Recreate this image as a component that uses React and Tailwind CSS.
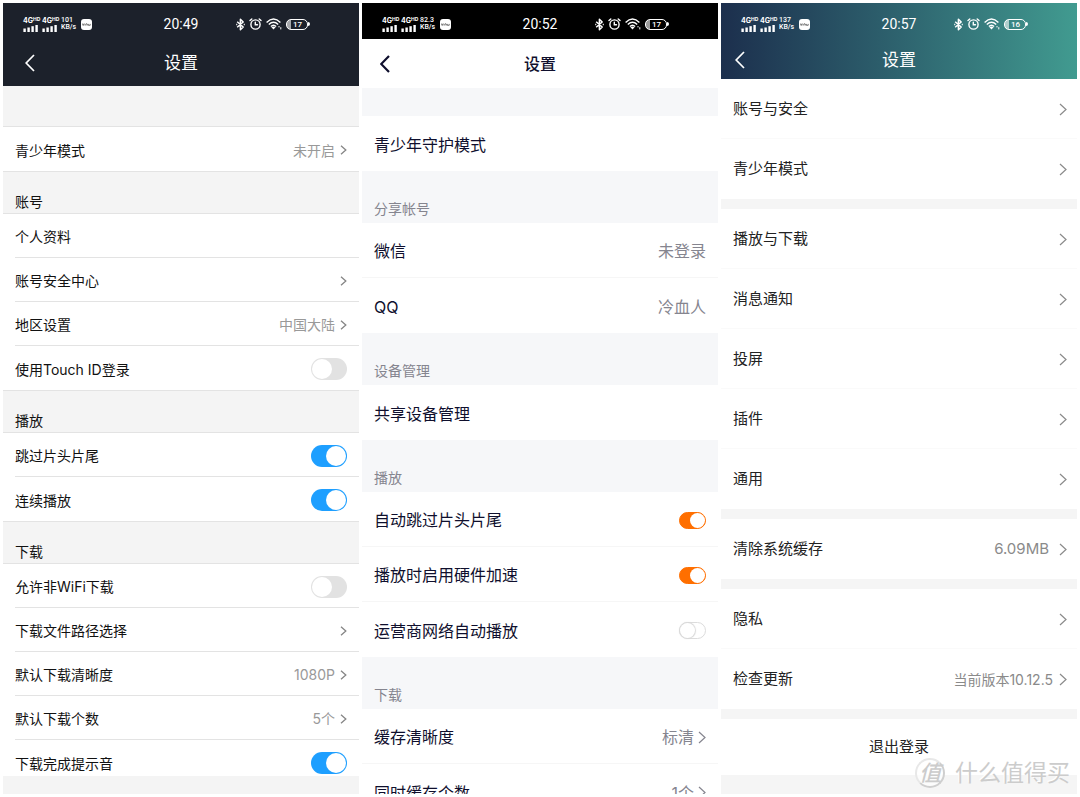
import React from "react";

function Signal() {
  return (
    <span className="flex w-4 flex-col items-start gap-px">
      <span className="flex items-start text-[7px] leading-[7px] font-bold">
        4G<sup className="top-0 text-[5px] leading-[5px] font-bold">HD</sup>
      </span>
      <svg width="15" height="7" viewBox="0 0 15 7" fill="currentColor" aria-hidden="true">
        <rect x="0.4" y="3.5" width="2.4" height="3.5" />
        <rect x="4.4" y="2.5" width="2.4" height="4.5" />
        <rect x="8.4" y="1.2" width="2.4" height="5.8" />
        <rect x="12.4" y="0" width="2.4" height="7" />
      </svg>
    </span>
  );
}

function StatusBar({ speed, time, battery, className = "" }) {
  return (
    <div className={`grid h-9 grid-cols-[1fr_auto_1fr] items-center pt-1.5 text-white ${className}`}>
      <div className="flex items-center gap-[3px] pl-5">
        <Signal />
        <Signal />
        <span className="w-4 font-['Roboto'] text-[7px] leading-[7px] font-medium">
          {speed}
          <br />
          KB/s
        </span>
        <span className="ml-px flex h-[11px] w-[11px] items-center justify-center rounded-[3px] bg-white">
          <svg width="9" height="3" viewBox="0 0 9 3" fill="none" stroke="#555" strokeWidth="0.8" aria-hidden="true">
            <path d="M0.3 0.5 1.2 2.5 2.1 0.5M3 0.8V2.5M4 2.4V1.2Q5 0 5.4 1.2V2.4M6.3 0.9V2.3H8.2V0.9" />
          </svg>
        </span>
      </div>
      <time className="font-['Roboto'] text-[14px] leading-5">{time}</time>
      <div className="flex items-center gap-1 pl-[38px]">
        <svg width="9" height="13" viewBox="0 0 9 13" fill="none" stroke="currentColor" strokeWidth="1.5" strokeLinejoin="round" aria-hidden="true">
          <path d="M1.2 3.8 7.2 9 4.4 11.8V1.2L7.2 4 1.2 9.2" />
          <path d="M0.2 6.5h1.1M7.7 6.5h1.1" />
        </svg>
        <svg width="13" height="12" viewBox="0 0 13 12" fill="none" stroke="currentColor" strokeWidth="1.4" strokeLinecap="round" aria-hidden="true">
          <circle cx="6.5" cy="6.5" r="4.6" />
          <path d="M6.3 4.2v2.6h2.2M1 2.6 2.8 0.9M12 2.6 10.2 0.9" />
        </svg>
        <svg width="16" height="12" viewBox="0 0 16 12" fill="none" stroke="currentColor" strokeWidth="1.4" aria-hidden="true">
          <path d="M0.6 4.4Q7.5-2.4 14.4 4.4M2.8 6.5Q7.5 2 12.2 6.5M4.9 8.6Q7.5 6 10.1 8.6" />
          <path d="M7.5 11.6 5.4 9.3Q7.5 7.8 9.6 9.3Z" fill="currentColor" stroke="none" />
          <path d="M13 8v1.4M14.8 9.2v2.2" strokeWidth="1" />
        </svg>
        <span className="flex items-center">
          <span className="flex h-[11px] w-[22px] items-center justify-center rounded-[5px] border border-current bg-linear-to-r from-white/60 from-[18%] to-transparent to-[18%] font-['Roboto'] text-[8px] leading-[9px] font-medium">
            {battery}
          </span>
          <span className="h-1 w-[2px] rounded-r-sm bg-current" />
        </span>
      </div>
    </div>
  );
}

function BackButton({ className = "", width = 1.7 }) {
  return (
    <button type="button" aria-label="返回" className={`flex h-6 items-center justify-start ${className}`}>
      <svg width="10" height="18" viewBox="0 0 10 18" fill="none" stroke="currentColor" strokeWidth={width} aria-hidden="true">
        <path d="M9 1 1.2 9 9 17" />
      </svg>
    </button>
  );
}

function TitleBar({ className, titleClass, backClass, stroke }) {
  return (
    <div className={`grid grid-cols-[1fr_auto_1fr] items-center ${className}`}>
      <BackButton className={backClass} width={stroke} />
      <h1 className={titleClass}>设置</h1>
    </div>
  );
}

function Chevron({ size = "small" }) {
  if (size === "small") {
    return (
      <svg width="7" height="10" viewBox="0 0 7 10" fill="none" stroke="#858585" strokeWidth="1.3" aria-hidden="true">
        <path d="M1 0.8 5.8 5 1 9.2" />
      </svg>
    );
  }
  return (
    <svg width="8" height="13" viewBox="0 0 8 13" fill="none" stroke="currentColor" strokeWidth="1.2" aria-hidden="true">
      <path d="M1 1 7 6.5 1 12" />
    </svg>
  );
}

function BlueSwitch({ id, on }) {
  return (
    <input
      id={id}
      type="checkbox"
      role="switch"
      defaultChecked={on}
      className="h-[22px] w-9 appearance-none rounded-full bg-[#e2e2e2] p-px before:block before:h-5 before:w-5 before:rounded-full before:bg-white checked:bg-[#1e9fff] checked:pl-[15px]"
    />
  );
}

function OrangeSwitch({ id, on }) {
  return (
    <input
      id={id}
      type="checkbox"
      role="switch"
      defaultChecked={on}
      className="h-[17px] w-[27px] appearance-none rounded-full border border-[#dcdcdc] bg-white before:block before:h-[15px] before:w-[15px] before:rounded-full before:bg-white before:shadow-[0_0_1px_1px_#d8d8d8] checked:border-[#ff6f00] checked:bg-[#ff6f00] checked:pl-[10px] checked:before:shadow-none"
    />
  );
}

function Row({ item, rowClass, valueClass, Switch, chevron, prefix }) {
  const id = `${prefix}-${item.label}`;
  if (item.on !== undefined) {
    return (
      <div className={rowClass}>
        <label htmlFor={id}>{item.label}</label>
        <Switch id={id} on={item.on} />
      </div>
    );
  }
  return (
    <button type="button" className={rowClass}>
      <span>{item.label}</span>
      <span className={`flex items-center ${valueClass}`}>
        {item.value}
        {item.arrow && <Chevron size={chevron} />}
      </span>
    </button>
  );
}

const first = [
  { rows: [{ label: "青少年模式", value: "未开启", arrow: true }] },
  {
    title: "账号",
    rows: [
      { label: "个人资料" },
      { label: "账号安全中心", arrow: true },
      { label: "地区设置", value: "中国大陆", arrow: true },
      { label: "使用Touch ID登录", on: false },
    ],
  },
  {
    title: "播放",
    rows: [
      { label: "跳过片头片尾", on: true },
      { label: "连续播放", on: true },
    ],
  },
  {
    title: "下载",
    rows: [
      { label: "允许非WiFi下载", on: false },
      { label: "下载文件路径选择", arrow: true },
      { label: "默认下载清晰度", value: "1080P", arrow: true },
      { label: "默认下载个数", value: "5个", arrow: true },
      { label: "下载完成提示音", on: true },
    ],
  },
];

const second = [
  { rows: [{ label: "青少年守护模式" }] },
  {
    title: "分享帐号",
    rows: [
      { label: "微信", value: "未登录" },
      { label: "QQ", value: "冷血人" },
    ],
  },
  { title: "设备管理", rows: [{ label: "共享设备管理" }] },
  {
    title: "播放",
    rows: [
      { label: "自动跳过片头片尾", on: true },
      { label: "播放时启用硬件加速", on: true },
      { label: "运营商网络自动播放", on: false },
    ],
  },
  {
    title: "下载",
    rows: [
      { label: "缓存清晰度", value: "标清", arrow: true },
      { label: "同时缓存个数", value: "1个", arrow: true },
    ],
  },
];

const third = [
  [{ label: "账号与安全" }, { label: "青少年模式" }],
  [{ label: "播放与下载" }, { label: "消息通知" }, { label: "投屏" }, { label: "插件" }, { label: "通用" }],
  [{ label: "清除系统缓存", value: "6.09MB", valueClass: "gap-2.5 text-[15px]" }],
  [{ label: "隐私" }, { label: "检查更新", value: "当前版本10.12.5", valueClass: "gap-1.5 text-[14px]" }],
];

function FirstPhone() {
  return (
    <section className="flex min-h-0 flex-col overflow-hidden bg-white text-[14px] text-[#111]">
      <header className="shrink-0 bg-[#1c212b] text-white">
        <StatusBar speed="101" time="20:49" battery="17" />
        <TitleBar className="h-[47px]" titleClass="text-[17px] leading-6" backClass="pl-[22px]" />
      </header>
      <div className="min-h-0 flex-1 overflow-hidden">
        {first.map((group, i) => (
          <div key={i}>
            {group.title ? (
              <h2 className="flex h-[43px] items-end border-y border-[#e3e3e3] bg-[#f4f4f4] px-3 pb-px leading-5">
                {group.title}
              </h2>
            ) : (
              <div className="h-[41px] border-b border-[#e3e3e3] bg-[#f4f4f4]" />
            )}
            <div className="divide-y divide-[#e3e3e3] pl-3">
              {group.rows.map((item) => (
                <Row
                  key={item.label}
                  item={item}
                  prefix="first"
                  rowClass="flex h-11 w-full items-center justify-between pt-0.5 pr-3 text-left"
                  valueClass="gap-[5px] text-[#999]"
                  Switch={BlueSwitch}
                  chevron="small"
                />
              ))}
            </div>
          </div>
        ))}
      </div>
      <div className="h-[18px] shrink-0 bg-[#f4f4f4]" />
    </section>
  );
}

function SecondPhone() {
  return (
    <section className="flex min-h-0 flex-col overflow-hidden bg-white text-[16px] text-[#0f0f2d]">
      <header className="shrink-0">
        <StatusBar speed="82.3" time="20:52" battery="17" className="bg-black" />
        <TitleBar className="h-[49px]" titleClass="text-[16px] leading-6 font-medium" backClass="pl-[18px]" stroke={2.2} />
      </header>
      <div className="min-h-0 flex-1 overflow-hidden">
        {second.map((group, i) => (
          <div key={i}>
            {group.title ? (
              <h2 className="flex h-[52px] items-end bg-[#f6f7f9] px-3 pb-1 text-[14px] leading-5 text-[#85858f]">
                {group.title}
              </h2>
            ) : (
              <div className="h-7 bg-[#f6f7f9]" />
            )}
            <div className="divide-y divide-[#f6f6f6]">
              {group.rows.map((item) => (
                <Row
                  key={item.label}
                  item={item}
                  prefix="second"
                  rowClass="flex h-[55px] w-full items-center justify-between px-3 pt-0.5 text-left"
                  valueClass="gap-1 text-[#85858f]"
                  Switch={OrangeSwitch}
                  chevron="large"
                />
              ))}
            </div>
          </div>
        ))}
      </div>
    </section>
  );
}

function ThirdPhone() {
  return (
    <section className="flex min-h-0 flex-col overflow-hidden bg-[#f5f5f5] text-[15px] text-[#222]">
      <header className="shrink-0 bg-linear-to-r from-[#1c2f4d] to-[#419b90] text-white">
        <StatusBar speed="137" time="20:57" battery="16" />
        <TitleBar className="h-10 pt-0.5" titleClass="text-[17px] leading-6" backClass="pl-[14px]" />
      </header>
      <div className="flex shrink-0 flex-col gap-2.5">
        {third.map((rows, i) => (
          <div key={i} className="divide-y divide-[#fafafa] bg-white">
            {rows.map((item) => (
              <Row
                key={item.label}
                item={{ ...item, arrow: true }}
                prefix="third"
                rowClass="flex h-[60px] w-full items-center justify-between pt-px pr-2.5 pl-3 text-left"
                valueClass={`text-[#8a8a8a] ${item.valueClass || ""}`}
                chevron="large"
              />
            ))}
          </div>
        ))}
        <button type="button" className="h-14 w-full bg-white">
          退出登录
        </button>
      </div>
    </section>
  );
}

function Watermark() {
  return (
    <div className="pointer-events-none absolute right-2.5 bottom-2 flex items-center gap-2.5 text-[#cccccc]">
      <span className="flex h-[30px] w-[30px] items-center justify-center rounded-full border-2 border-l-[#e8e8e8] border-t-[#e8e8e8] border-r-[#cfcfcf] border-b-[#cfcfcf] bg-white/70 text-[22px] leading-6 font-medium italic">
        值
      </span>
      <span className="text-[23px] leading-8 [text-shadow:-1px_-1px_0_#fff]">什么值得买</span>
    </div>
  );
}

export default function App() {
  return (
    <main className="relative grid h-screen grid-cols-3 gap-[3px] overflow-hidden bg-white p-[3px] font-['Inter','Noto_Sans_CJK_SC',sans-serif]">
      <FirstPhone />
      <SecondPhone />
      <ThirdPhone />
      <Watermark />
    </main>
  );
}
